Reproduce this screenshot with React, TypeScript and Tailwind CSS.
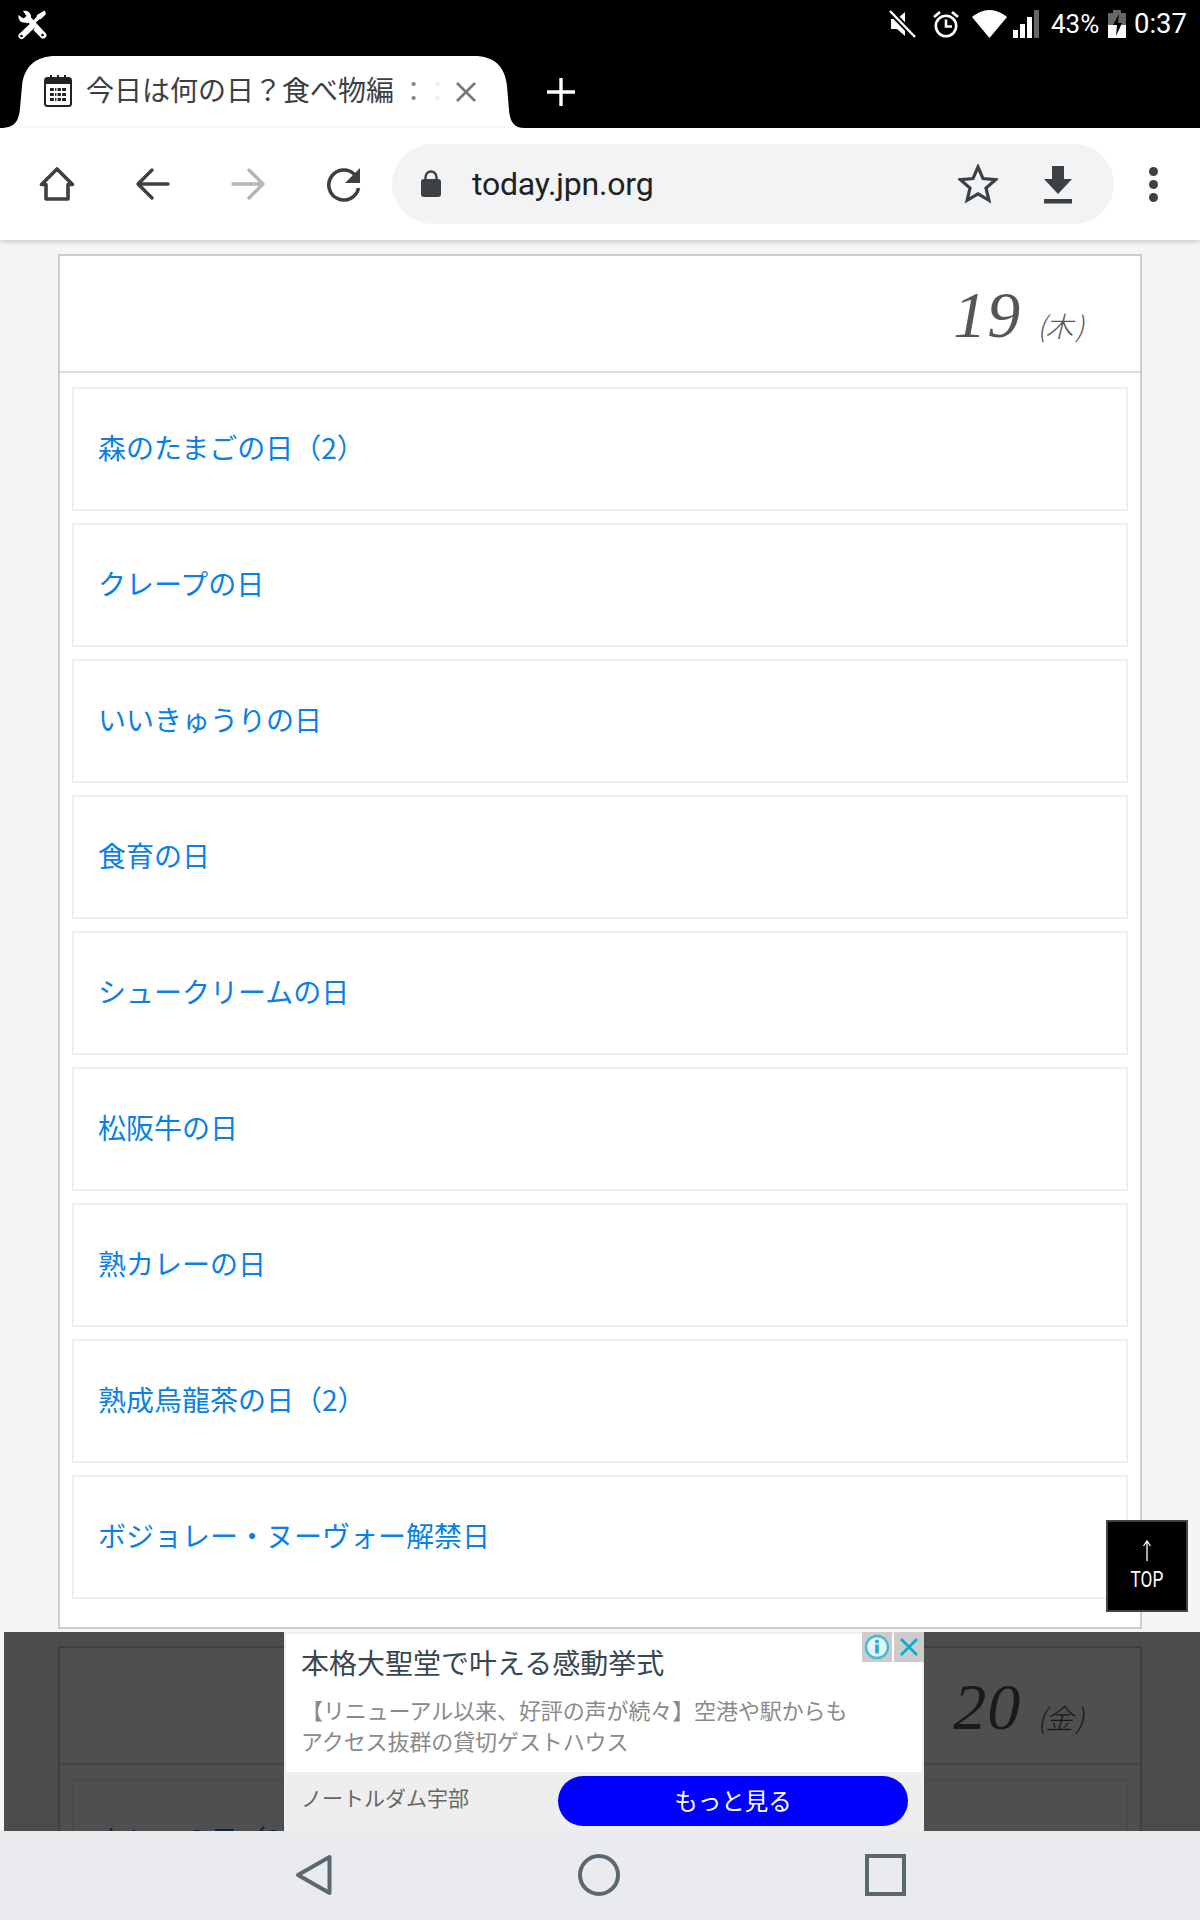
import React from "react";

const JP = "font-['Roboto','Noto_Sans_CJK_JP',sans-serif]";

const items1 = [
  "森のたまごの日（2）",
  "クレープの日",
  "いいきゅうりの日",
  "食育の日",
  "シュークリームの日",
  "松阪牛の日",
  "熟カレーの日",
  "熟成烏龍茶の日（2）",
  "ボジョレー・ヌーヴォー解禁日",
];

function DayCard({ day, week, items }: { day: string; week: string; items: string[] }) {
  return (
    <section className="border-2 border-[#cccccc] bg-white">
      <header className="h-[117px] border-b-2 border-[#dddddd] flex items-center justify-end pr-[57px] text-[#555555]">
        <span className="font-['Liberation_Serif',serif] italic text-[66px] leading-none tracking-[1px] pt-[2px]">{day}</span>
        <span className="ml-[16px] mt-[22px] italic text-[28px] leading-none tracking-[-1px] font-['Noto_Sans_CJK_JP',sans-serif] font-light whitespace-nowrap">
          ({week}<span className="ml-[3px]">)</span>
        </span>
      </header>
      <ul className="pt-[14px] px-[12px] pb-[28px] flex flex-col gap-[12px]">
        {items.map((t) => (
          <li key={t} className="h-[124px] border-2 border-[#eeeeee] flex items-center pl-[24px]">
            <a className="text-[28px] leading-none -mt-[5px] text-[#0a7fe6] font-['Noto_Sans_CJK_JP',sans-serif]">{t}</a>
          </li>
        ))}
      </ul>
    </section>
  );
}

function StatusIcons() {
  return (
    <div className="flex items-center text-white">
      <svg width="28" height="28" viewBox="0 0 28 28" className="mr-[15px]">
        <path d="M2 9h6l8-7v24l-8-7H2z" fill="#fff" />
        <path d="M1 1l25 26" stroke="#000" strokeWidth="6" />
        <path d="M1 1l25 26" stroke="#fff" strokeWidth="2.4" />
      </svg>
      <svg width="28" height="28" viewBox="0 0 28 28" className="mr-[12px]">
        <circle cx="14" cy="16" r="10.2" fill="none" stroke="#fff" strokeWidth="2.6" />
        <path d="M14 9.5V16.5H20" fill="none" stroke="#fff" strokeWidth="2.6" />
        <path d="M2 7l6-5M26 7l-6-5" stroke="#fff" strokeWidth="2.8" />
      </svg>
      <svg width="35" height="28" viewBox="0 0 35 28" className="mr-[6px]">
        <path d="M17.5 28L0 7C5 3 11 0 17.5 0S30 3 35 7z" fill="#fff" />
      </svg>
      <svg width="27" height="28" viewBox="0 0 27 28" className="mr-[11px]">
        <rect x="0" y="20" width="5" height="8" fill="#fff" />
        <rect x="7" y="14" width="5" height="14" fill="#fff" />
        <rect x="14" y="7" width="5" height="21" fill="#fff" />
        <rect x="21" y="0" width="5" height="28" fill="#666" />
      </svg>
      <span className="text-[26px] leading-none font-['Roboto',sans-serif] w-[47px]">43%</span>
      <svg width="18" height="28" viewBox="0 0 18 28" className="ml-[10px] mr-[8px]">
        <path d="M5 0h8v3h5v25H0V3h5z" fill="#666" />
        <path d="M0 15h18v13H0z" fill="#fff" />
        <path d="M11 4L5 15h4l-1 11 6-13h-4z" fill="#000" />
      </svg>
      <span className="text-[27.5px] leading-none font-['Roboto',sans-serif]">0:37</span>
    </div>
  );
}

function Tab() {
  return (
    <div className="relative w-[525px] h-[72px] shrink-0">
      <svg width="525" height="72" viewBox="0 0 525 72" className="absolute inset-0">
        <path
          d="M0 72C14 72 19 66 20 52L22 30C24 10 36 0 56 0H474C494 0 505 10 507 30L509 54C510 66 514 72 525 72Z"
          fill="#fff"
        />
      </svg>
      <svg width="28" height="33" viewBox="0 0 28 33" className="absolute left-[44px] top-[18px]">
        <rect x="1" y="4" width="26" height="28" rx="2.5" fill="#fff" stroke="#222" strokeWidth="2" />
        <rect x="1" y="4" width="26" height="6" fill="#222" />
        <path d="M7 1v7M14 1v7M21 1v7" stroke="#222" strokeWidth="2" fill="none" />
        <path d="M6 14h16v3H6zM6 19h16v3H6zM6 24h16v3H6z" fill="#222" />
        <path d="M10.5 14v13M13 14v13M17.5 14v13" stroke="#fff" strokeWidth="1.2" />
      </svg>
      <span className={`absolute left-[86px] top-[18px] text-[28px] leading-[36px] text-[#3c4043] ${JP} whitespace-nowrap`}>
        今日は何の日？食べ物編
      </span>
      <span className={`absolute left-[400px] top-[18px] text-[27px] leading-[36px] text-[#888888] ${JP}`}>：</span>
      <span className={`absolute left-[424px] top-[18px] text-[27px] leading-[36px] text-[#eeeeee] ${JP}`}>：</span>
      <svg width="22" height="22" viewBox="0 0 22 22" className="absolute left-[455px] top-[25px]">
        <path d="M2 2l18 18M20 2L2 20" stroke="#777" strokeWidth="2.6" />
      </svg>
    </div>
  );
}

function Toolbar() {
  const c = "#3c4043";
  return (
    <div className="relative z-10 h-[112px] bg-white shadow-[0_2px_6px_rgba(0,0,0,0.18)] flex items-center shrink-0">
      <div className="w-[392px] flex shrink-0">
        <div className="w-[113px] flex justify-center">
          <svg width="36" height="36" viewBox="0 0 36 36">
            <path d="M18 3L2.5 18.5H7V33H29V18.5H33.5Z" fill="none" stroke={c} strokeWidth="3.6" strokeLinejoin="round" />
          </svg>
        </div>
        <div className="w-[80px] flex justify-center">
          <svg width="36" height="36" viewBox="0 0 36 36">
            <path d="M33 18H4M17 4L3 18l14 14" fill="none" stroke={c} strokeWidth="3.4" strokeLinecap="round" strokeLinejoin="round" />
          </svg>
        </div>
        <div className="w-[110px] flex justify-center">
          <svg width="36" height="36" viewBox="0 0 36 36">
            <path d="M3 18h29M19 4l14 14-14 14" fill="none" stroke="#b5b5b5" strokeWidth="3.4" strokeLinecap="round" strokeLinejoin="round" />
          </svg>
        </div>
        <div className="w-[81px] flex justify-center">
          <svg width="36" height="36" viewBox="0 0 36 36">
            <path d="M29 9A15 15 0 1 0 32.5 22" fill="none" stroke={c} strokeWidth="3.6" />
            <path d="M34 2V17H19Z" fill={c} />
          </svg>
        </div>
      </div>
      <div className="w-[722px] h-[80px] rounded-full bg-[#f1f3f4] flex items-center relative shrink-0">
        <svg width="22" height="30" viewBox="0 0 22 30" className="ml-[28px]">
          <path d="M5.5 11V8a5.5 5.5 0 0 1 11 0v3" fill="none" stroke={c} strokeWidth="2.4" />
          <rect x="1" y="10" width="20" height="18" rx="3" fill={c} />
        </svg>
        <span className="ml-[30px] text-[32px] leading-none tracking-[-0.2px] text-[#202124] font-['Roboto',sans-serif]">today.jpn.org</span>
        <svg width="40" height="40" viewBox="0 0 40 40" className="absolute left-[566px] top-[20px]">
          <path d="M20 3l5 11.6 12.6 1.1-9.6 8.3 2.9 12.3L20 29.8 9.1 36.3 12 24l-9.6-8.3L15 14.6z" fill="none" stroke={c} strokeWidth="3.2" strokeLinejoin="miter" />
        </svg>
        <svg width="30" height="40" viewBox="0 0 30 40" className="absolute left-[651px] top-[22px]">
          <path d="M9 0H21V13H29L15 28 1 13H9Z" fill={c} />
          <rect x="1" y="33" width="28" height="4.5" fill={c} />
        </svg>
      </div>
      <div className="ml-[35px] flex flex-col gap-[4px]">
        <span className="w-[9px] h-[9px] rounded-full bg-[#3c4043]" />
        <span className="w-[9px] h-[9px] rounded-full bg-[#3c4043]" />
        <span className="w-[9px] h-[9px] rounded-full bg-[#3c4043]" />
      </div>
    </div>
  );
}

function Ad() {
  return (
    <div className={`absolute left-[280px] top-0 w-[640px] h-[199px] bg-[#eeeeee] pt-[2px] px-[2px] flex flex-col ${JP}`}>
      <div className="h-[138px] bg-white pl-[15px] pt-[13px]">
        <p className="text-[28px] leading-[36px] text-[#37474f]">本格大聖堂で叶える感動挙式</p>
        <p className="mt-[13px] text-[22px] leading-[31px] text-[#8a8a8a] tracking-[-0.1px]">
          【リニューアル以来、好評の声が続々】空港や駅からも
          <br />
          アクセス抜群の貸切ゲストハウス
        </p>
      </div>
      <div className="flex-1 flex items-start pl-[15px]">
        <span className="text-[21px] leading-none text-[#666666] mt-[17px]">ノートルダム宇部</span>
        <a className="absolute left-[274px] top-[144px] w-[350px] h-[50px] rounded-full bg-[#0000ff] text-white text-[23.5px] flex items-center justify-center pt-[3px]">
          もっと見る
        </a>
      </div>
      <div className="absolute right-0 top-0 flex gap-[2px]">
        <div className="w-[30px] h-[30px] bg-[#cccccc] flex items-center justify-center">
          <svg width="26" height="26" viewBox="0 0 26 26">
            <circle cx="13" cy="13" r="11" fill="#e6f4f8" stroke="#44bcd8" strokeWidth="2.4" />
            <circle cx="13" cy="7.5" r="1.9" fill="#20afd0" />
            <rect x="11.2" y="10.5" width="3.6" height="9" fill="#20afd0" />
          </svg>
        </div>
        <div className="w-[30px] h-[30px] bg-[#cccccc] flex items-center justify-center">
          <svg width="22" height="22" viewBox="0 0 22 22">
            <path d="M3 3l16 16M19 3L3 19" stroke="#00b0d0" strokeWidth="2.6" />
          </svg>
        </div>
      </div>
    </div>
  );
}

export default function App() {
  return (
    <div className={`relative w-[1200px] h-[1920px] overflow-hidden flex flex-col bg-[#f5f5f5] ${JP}`}>
      <div className="h-[128px] bg-black shrink-0 flex flex-col">
        <div className="h-[56px] flex justify-between items-start pt-[10px] pl-[17px] pr-[13px]">
          <svg width="30" height="30" viewBox="0 0 30 30">
            <path d="M1.5 5l5 3.5L9.5 6 6 1C10.5-.5 14.5 3 14 7.5L28.5 23a3.2 3.2 0 0 1-4.8 4.5L9 12.5C4.5 13.500 .5 10 1.500 5z" fill="#fff" />
            <path d="M27.500 .5l1.500 3.500-5 5-2 .5-5 5-2.500-2.500 5-5 .5-2z" fill="#fff" />
            <path d="M14.500 15.500L4.500 26" stroke="#000" strokeWidth="9" />
            <path d="M15 16L4.500 26" stroke="#fff" strokeWidth="6" strokeLinecap="round" />
            <circle cx="4.500" cy="26" r="1.300" fill="#000" />
            <circle cx="25.500" cy="25" r="1.300" fill="#000" />
          </svg>
          <StatusIcons />
        </div>
        <div className="h-[72px] flex items-center">
          <Tab />
          <svg width="30" height="30" viewBox="0 0 30 30" className="ml-[21px]">
            <path d="M15 1v28M1 15h28" stroke="#fff" strokeWidth="3.4" />
          </svg>
        </div>
      </div>
      <Toolbar />
      <main className="relative flex-1 min-h-0 overflow-hidden px-[58px] pt-[14px]">
        <div className="flex flex-col gap-[17px]">
          <DayCard day="19" week="木" items={items1} />
          <DayCard day="20" week="金" items={["カレーの日（2）"]} />
        </div>
        <a className="absolute left-[1106px] top-[1280px] w-[82px] h-[92px] bg-black border-[2px] border-[#444444] text-white flex flex-col items-center pt-[18px] z-20">
          <svg width="10" height="22" viewBox="0 0 10 22">
            <path d="M5 21V1M1.500 6L5 1l3.500 5" fill="none" stroke="#fff" strokeWidth="1.300" />
          </svg>
          <span className="text-[22px] leading-none mt-[7px] font-['Roboto',sans-serif] scale-x-[0.78]">TOP</span>
        </a>
        <div className="absolute left-[4px] right-0 bottom-0 top-[1392px] bg-[rgba(0,0,0,0.69)] z-10">
          <Ad />
        </div>
      </main>
      <nav className="h-[89px] bg-[#e9ebef] shrink-0 relative flex items-center">
        <div className="w-[1200px] flex justify-between pl-[295px] pr-[294px] items-center -mt-[1px]">
          <svg width="37" height="42" viewBox="0 0 37 42">
            <path d="M34.500 3V39L3 21Z" fill="none" stroke="#5a6872" strokeWidth="4" strokeLinejoin="round" />
          </svg>
          <svg width="42" height="42" viewBox="0 0 42 42">
            <circle cx="21" cy="21" r="19" fill="none" stroke="#5a6872" strokeWidth="4" />
          </svg>
          <svg width="41" height="42" viewBox="0 0 41 42">
            <rect x="2" y="2" width="37" height="38" fill="none" stroke="#5a6872" strokeWidth="4" />
          </svg>
        </div>
      </nav>
    </div>
  );
}
